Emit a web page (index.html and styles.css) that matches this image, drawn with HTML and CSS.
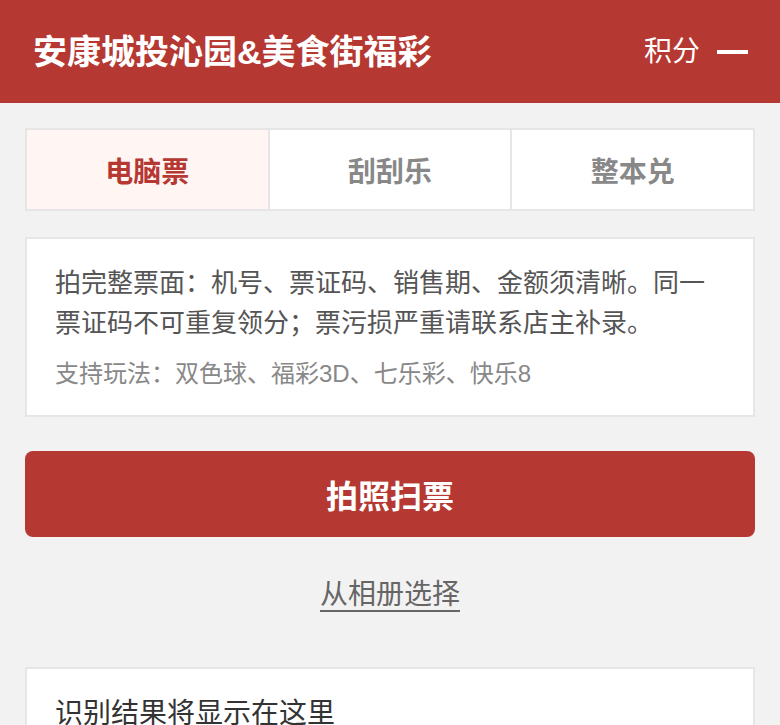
FILE: index.html
```html
<!DOCTYPE html>
<html lang="zh-CN">
<head>
    <meta charset="UTF-8">
    <meta name="viewport" content="width=device-width, initial-scale=1.0">
    <title>扫票积分</title>
    <link rel="stylesheet" href="styles.css">
</head>
<body>
    <header class="topbar">
        <h1 class="shop-name">安康城投沁园&amp;美食街福彩</h1>
        <div class="points">
            <span>积分</span>
            <span class="points-value"></span>
        </div>
    </header>

    <main class="page">
        <!-- ticket type tabs -->
        <div class="tabs">
            <div class="tab active">电脑票</div>
            <div class="tab">刮刮乐</div>
            <div class="tab">整本兑</div>
        </div>

        <div class="card tips">
            <p class="tips-main">拍完整票面：机号、票证码、销售期、金额须清晰。同一票证码不可重复领分；票污损严重请联系店主补录。</p>
            <p class="tips-sub">支持玩法：双色球、福彩3D、七乐彩、快乐8</p>
        </div>

        <button class="scan-btn">拍照扫票</button>

        <div class="album">
            <a href="#" class="album-link">从相册选择</a>
        </div>

        <div class="card result">
            识别结果将显示在这里
        </div>
    </main>
</body>
</html>
```

FILE: styles.css
```css
* {
    box-sizing: border-box;
}

body {
    margin: 0;
    padding: 0;
    background-color: #f2f2f2;
    font-family: "Liberation Sans", "Noto Sans CJK SC", sans-serif;
    color: #333;
}

.topbar {
    height: 103px;
    background-color: #b53832;
    color: #fff;
    display: flex;
    align-items: center;
    justify-content: space-between;
    padding: 0 32px 0 33px;
}

.shop-name {
    margin: 0;
    font-size: 34px;
    font-weight: bold;
    line-height: 40px;
}

.points {
    display: flex;
    align-items: center;
    gap: 17px;
    font-size: 28px;
    line-height: 34px;
}

.points-value {
    width: 31px;
    height: 4px;
    background-color: #fff;
}

.page {
    padding: 25px 25px 0;
}

.tabs {
    display: flex;
    border: 2px solid #e6e6e6;
    background-color: #fff;
}

.tab {
    flex: 1;
    height: 79px;
    display: flex;
    align-items: center;
    justify-content: center;
    font-size: 28px;
    font-weight: bold;
    color: #888;
}

.tab + .tab {
    border-left: 2px solid #e6e6e6;
}

.tab.active {
    background-color: #fff5f3;
    color: #b53832;
}

.card {
    background-color: #fff;
    border: 2px solid #e6e6e6;
}

.tips {
    margin-top: 26px;
    padding: 24px 28px 23px;
}

.tips-main {
    margin: 0;
    font-size: 26px;
    line-height: 40px;
    color: #555;
}

.tips-sub {
    margin: 13px 0 0;
    font-size: 24px;
    line-height: 36px;
    color: #888;
}

.scan-btn {
    display: block;
    width: 100%;
    height: 86px;
    margin-top: 34px;
    border: none;
    border-radius: 8px;
    background-color: #b53832;
    color: #fff;
    font-family: inherit;
    font-size: 32px;
    font-weight: bold;
    cursor: pointer;
}

.album {
    text-align: center;
    padding: 36px 0 0;
    height: 130px;
}

.album-link {
    font-size: 28px;
    line-height: 44px;
    color: #666;
    text-decoration: underline;
    text-underline-offset: 6px;
    text-decoration-thickness: 2px;
}

.result {
    padding: 24px 28px;
    font-size: 28px;
    line-height: 42px;
    color: #333;
}
```
